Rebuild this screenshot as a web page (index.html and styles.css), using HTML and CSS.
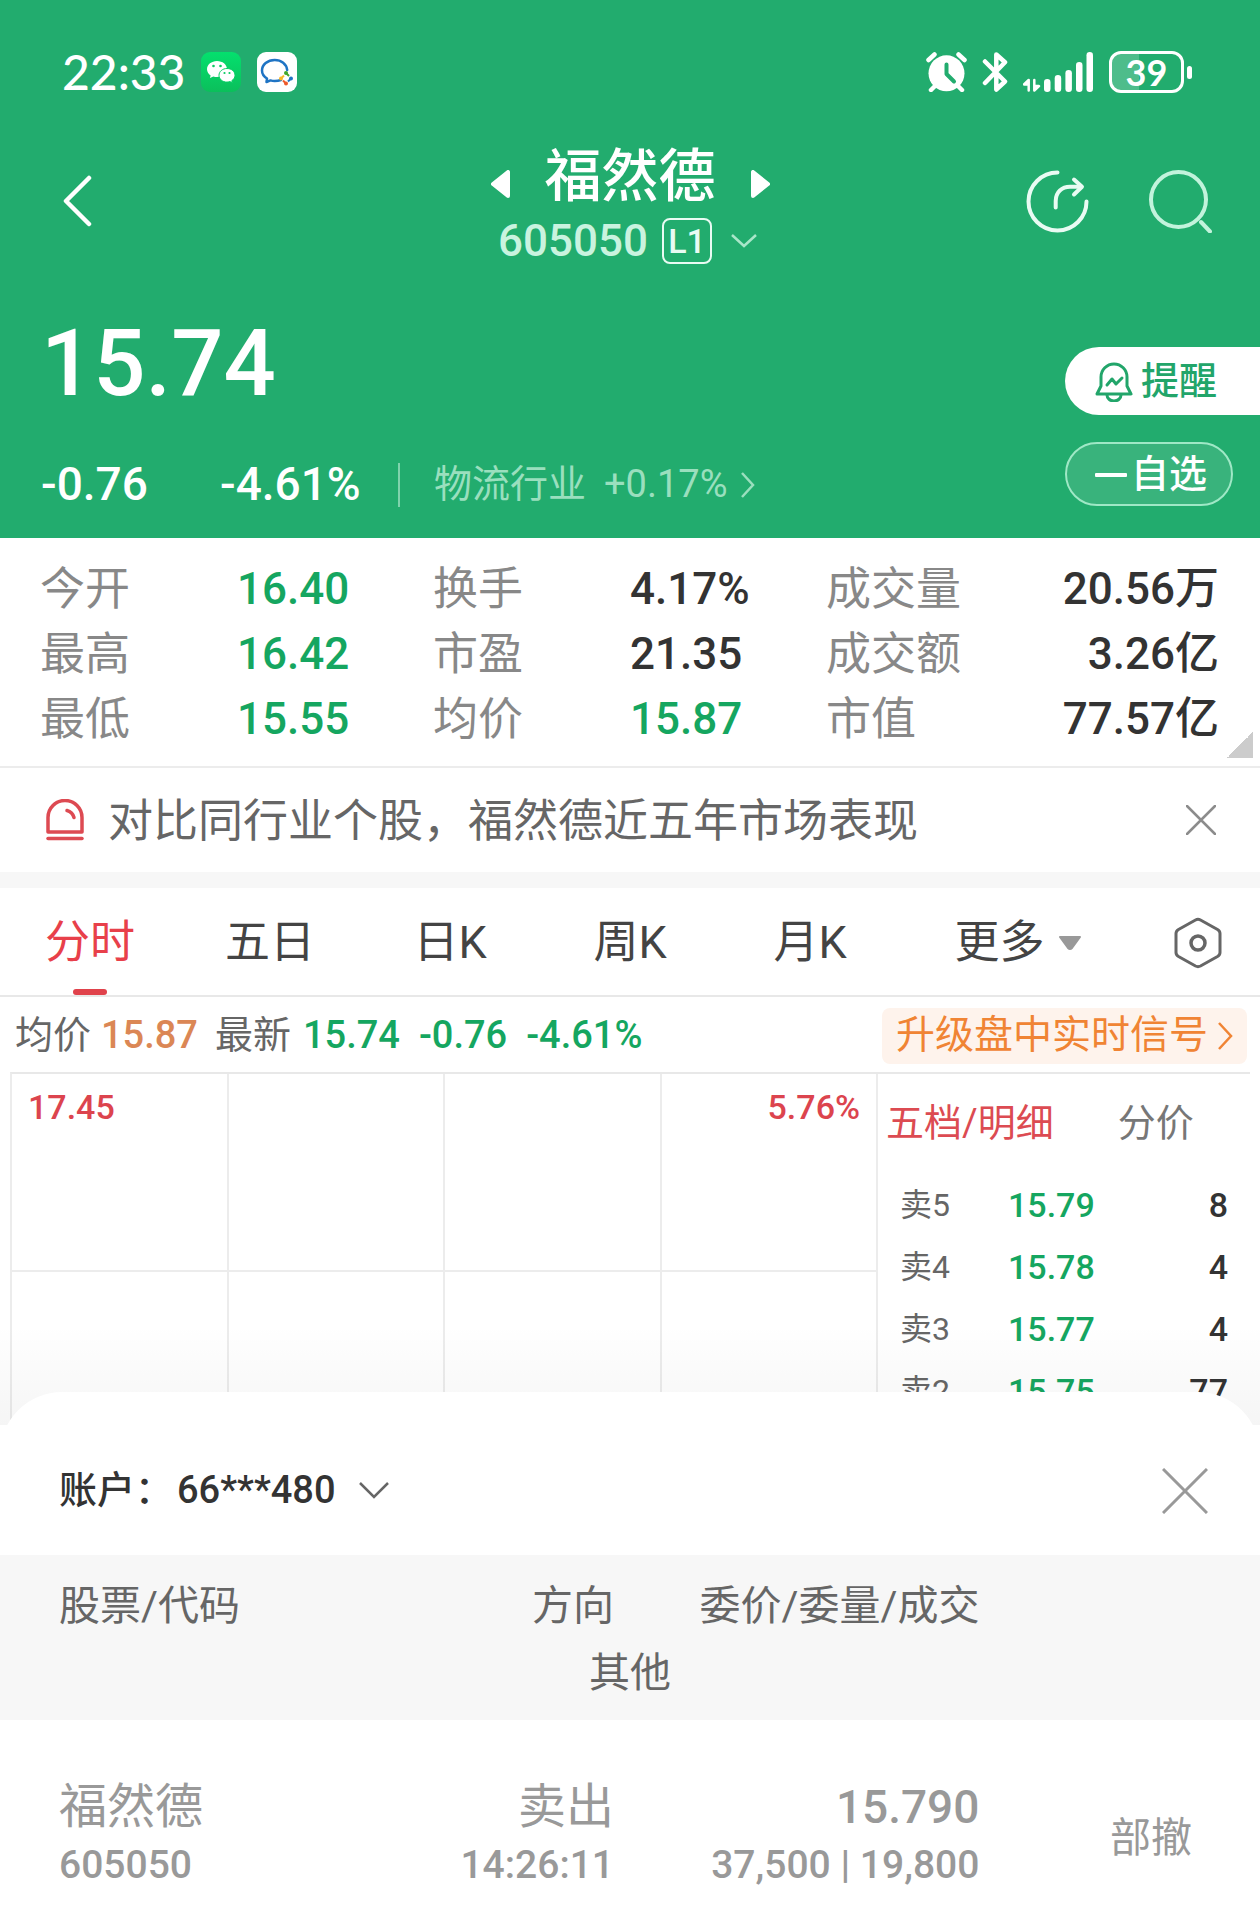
FILE: index.html
```html
<!DOCTYPE html>
<html lang="zh-CN">
<head>
    <meta charset="UTF-8">
    <meta name="viewport" content="width=device-width, initial-scale=1.0">
    <title>福然德 605050</title>
    <link rel="stylesheet" href="styles.css">
</head>
<body>
    <header class="hero">
        <div class="status-bar">
            <div class="status-left">
                <span class="clock">22:33</span>
                <svg class="app-icon" width="40" height="40" viewBox="0 0 40 40">
                    <defs>
                        <linearGradient id="wx" x1="0" y1="0" x2="0" y2="1">
                            <stop offset="0" stop-color="#04e06e"/>
                            <stop offset="1" stop-color="#0bbf5b"/>
                        </linearGradient>
                    </defs>
                    <rect width="40" height="40" rx="9" fill="url(#wx)"/>
                    <path d="M16 9C10.500 9 6 12.600 6 17.200c0 2.600 1.500 4.700 3.600 6.200L9 26l3.300-1.600c1.200.4 2.400.6 3.700.6 5.500 0 10-3.600 10-8S21.500 9 16 9z" fill="#fff"/>
                    <path d="M26 16.500c-4.500 0-8 3-8 6.800s3.500 6.800 8 6.800c1 0 2-.2 3-.5l2.300 1.300-.5-2.200c2-1.300 3.200-3.200 3.200-5.400 0-3.800-3.500-6.800-8-6.800z" fill="#fff" stroke="#06cf64" stroke-width="1"/>
                    <g fill="#0acb62">
                        <circle cx="12.500" cy="14" r="1.300"/>
                        <circle cx="19.500" cy="14" r="1.300"/>
                        <circle cx="23.500" cy="21" r="1.100"/>
                        <circle cx="28.500" cy="21" r="1.100"/>
                    </g>
                </svg>
                <svg class="app-icon" width="40" height="40" viewBox="0 0 40 40">
                    <rect width="40" height="40" rx="9" fill="#fff"/>
                    <path d="M24 28c-2 .7-4 1-6.300 1-1.500 0-3-.2-4.200-.6L9.500 30l.5-3.500C6.800 24.500 5 21.600 5 18.500 5 12.700 10.500 8 17.700 8 24.300 8 29.500 12 30.200 18" fill="none" stroke="#1f74c4" stroke-width="2.500" stroke-linecap="round" stroke-linejoin="round"/>
                    <circle cx="29" cy="21" r="2" fill="#43a82e"/>
                    <circle cx="34" cy="26.500" r="2" fill="#1f74c4"/>
                    <circle cx="29" cy="31.500" r="2" fill="#ee5a2b"/>
                    <circle cx="24" cy="26.500" r="2" fill="#f9b928"/>
                    <path d="M29 21l3 3" stroke="#43a82e" stroke-width="2"/>
                    <path d="M34 26.500l-3 3" stroke="#1f74c4" stroke-width="2"/>
                    <path d="M29 31.500l-3-3" stroke="#ee5a2b" stroke-width="2"/>
                    <path d="M24 26.500l3-3" stroke="#f9b928" stroke-width="2"/>
                </svg>
            </div>
            <div class="status-right">
                <svg width="41" height="40" viewBox="0 0 41 40">
                    <circle cx="20.500" cy="21.300" r="18" fill="#fff"/>
                    <path d="M2.500 8l6-5.500M38.500 8l-6-5.500M9 34l-4 4M32 34l4 4" stroke="#fff" stroke-width="4.500" stroke-linecap="round"/>
                    <path d="M20.500 12.500v9.500l7.500 7.500" fill="none" stroke="#22ac6e" stroke-width="4" stroke-linecap="round" stroke-linejoin="round"/>
                </svg>
                <svg width="26" height="40" viewBox="0 0 26 40">
                    <path d="M3 9.500L23 29.500 14.300 37.500V23M14.300 17V2.500L23 10.300 3 31" fill="none" stroke="#fff" stroke-width="4.500" stroke-linecap="round" stroke-linejoin="round"/>
                </svg>
                <svg width="71" height="40" viewBox="0 0 71 40">
                    <path d="M5.700 38.500V28L1 32.500h4M11.300 28v10.500l4.700-4.500h-4" fill="none" stroke="#fff" stroke-width="2.500" stroke-linecap="round" stroke-linejoin="round"/>
                    <g fill="#fff">
                        <rect x="21" y="27" width="6.500" height="13" rx="3.200"/>
                        <rect x="31.700" y="23" width="6.500" height="17" rx="3.200"/>
                        <rect x="42.400" y="18" width="6.500" height="22" rx="3.200"/>
                        <rect x="53" y="10" width="6.500" height="30" rx="3.200"/>
                        <rect x="63.500" y="0" width="6.500" height="40" rx="3.200"/>
                    </g>
                </svg>
                <div class="battery">
                    <span class="battery-body">39</span>
                    <span class="battery-cap"></span>
                </div>
            </div>
        </div>

        <nav class="stock-nav">
            <button class="icon-btn back" aria-label="返回">
                <svg width="30" height="54" viewBox="0 0 30 54">
                    <path d="M26 4L3 27l23 23" fill="none" stroke="#fff" stroke-width="4.500" stroke-linecap="round" stroke-linejoin="round"/>
                </svg>
            </button>
            <div class="stock-title">
                <div class="stock-name">
                    <button class="icon-btn" aria-label="上一只">
                        <svg width="20" height="28" viewBox="0 0 20 28">
                            <path d="M17 2v24L2 14z" fill="#fff" stroke="#fff" stroke-width="4" stroke-linejoin="round"/>
                        </svg>
                    </button>
                    <h1>福然德</h1>
                    <button class="icon-btn" aria-label="下一只">
                        <svg width="20" height="28" viewBox="0 0 20 28">
                            <path d="M3 2v24l15-12z" fill="#fff" stroke="#fff" stroke-width="4" stroke-linejoin="round"/>
                        </svg>
                    </button>
                </div>
                <button class="stock-code">
                    <span>605050</span>
                    <span class="level">L1</span>
                    <svg width="28" height="16" viewBox="0 0 28 16">
                        <path d="M2 2l12 11L26 2" fill="none" stroke="#a9e6c9" stroke-width="2.500"/>
                    </svg>
                </button>
            </div>
            <div class="nav-actions">
                <button class="icon-btn" aria-label="分享">
                    <svg width="63" height="63" viewBox="0 0 63 63">
                        <g fill="none" stroke="#e9fbf3" stroke-width="4" stroke-linecap="round" stroke-linejoin="round">
                            <path d="M31.500 2.500A29 29 0 1 0 60.500 31.500"/>
                            <path d="M29.700 37.500V31C29.700 22 36 16.700 44 16.700H55"/>
                            <path d="M48 9.500l8 7.200-8 7.800"/>
                        </g>
                    </svg>
                </button>
                <button class="icon-btn" aria-label="搜索">
                    <svg width="63" height="63" viewBox="0 0 63 63">
                        <g fill="none" stroke="#c2f3dc" stroke-width="4" stroke-linecap="round">
                            <circle cx="29.500" cy="29.500" r="27.500"/>
                            <path d="M52 52l9 9.500"/>
                        </g>
                    </svg>
                </button>
            </div>
        </nav>

        <div class="quote">
            <div class="quote-main">
                <div class="price">15.74</div>
                <div class="change-row">
                    <span class="change">-0.76</span>
                    <span class="percent">-4.61%</span>
                    <a class="industry" href="#industry">
                        <span class="industry-name">物流行业</span>
                        <span>+0.17%</span>
                        <svg width="16" height="28" viewBox="0 0 16 28">
                            <path d="M2 2l11 12L2 26" fill="none" stroke="#9adfbe" stroke-width="2.500"/>
                        </svg>
                    </a>
                </div>
            </div>
            <div class="quote-actions">
                <button class="remind">
                    <svg width="38" height="40" viewBox="0 0 38 40">
                        <g fill="none" stroke="#22a56a" stroke-width="3" stroke-linecap="round" stroke-linejoin="round">
                            <path d="M6 24V15a13 13 0 0 1 26 0v9l4 8H2z"/>
                            <path d="M12 33a7 6 0 0 0 14 0"/>
                            <path d="M12 23l5-6 4 5 6-6"/>
                        </g>
                    </svg>
                    提醒
                </button>
                <button class="watch">
                    <svg width="32" height="4" viewBox="0 0 32 4">
                        <rect width="32" height="4" rx="1" fill="#fff"/>
                    </svg>
                    自选
                </button>
            </div>
        </div>
    </header>

    <main>
        <dl class="stats">
            <div class="stat"><dt>今开</dt><dd class="down">16.40</dd></div>
            <div class="stat"><dt>换手</dt><dd>4.17%</dd></div>
            <div class="stat stat-wide"><dt>成交量</dt><dd>20.56万</dd></div>
            <div class="stat"><dt>最高</dt><dd class="down">16.42</dd></div>
            <div class="stat"><dt>市盈</dt><dd>21.35</dd></div>
            <div class="stat stat-wide"><dt>成交额</dt><dd>3.26亿</dd></div>
            <div class="stat"><dt>最低</dt><dd class="down">15.55</dd></div>
            <div class="stat"><dt>均价</dt><dd class="down">15.87</dd></div>
            <div class="stat stat-wide"><dt>市值</dt><dd>77.57亿</dd></div>
        </dl>

        <div class="notice">
            <svg width="38" height="42" viewBox="0 0 38 42">
                <g fill="none" stroke="#dd4a52" stroke-width="3.500" stroke-linecap="round" stroke-linejoin="round">
                    <path d="M2 33V18.500a17 17 0 0 1 34 0V33z"/>
                    <path d="M2 39.500h34"/>
                    <path d="M21 11.500c3.500 1 6 3.500 7 7"/>
                </g>
            </svg>
            <a class="notice-text" href="#compare">对比同行业个股，福然德近五年市场表现</a>
            <button class="icon-btn" aria-label="关闭提示">
                <svg width="30" height="30" viewBox="0 0 30 30">
                    <path d="M1 1l28 28M29 1L1 29" stroke="#8c8c8c" stroke-width="2.500" stroke-linecap="round"/>
                </svg>
            </button>
        </div>

        <div class="tabs">
            <button class="tab active">分时</button>
            <button class="tab">五日</button>
            <button class="tab">日K</button>
            <button class="tab">周K</button>
            <button class="tab">月K</button>
            <button class="tab">更多
                <svg width="24" height="16" viewBox="0 0 24 16">
                    <path d="M2 2h20l-8 11q-2 2-4 0z" fill="#999" stroke="#999" stroke-width="2" stroke-linejoin="round"/>
                </svg>
            </button>
            <button class="tab" aria-label="设置">
                <svg width="48" height="52" viewBox="0 0 48 52">
                    <path d="M21.500 3q2.500-1.300 5 0l17 9.500q2.500 1.500 2.500 4v19q0 2.500-2.500 4l-17 9.500q-2.500 1.300-5 0l-17-9.500Q2 38 2 35.500v-19q0-2.500 2.500-4z" fill="none" stroke="#666" stroke-width="3"/>
                    <circle cx="24" cy="26" r="7" fill="none" stroke="#666" stroke-width="3.500"/>
                </svg>
            </button>
        </div>

        <div class="summary">
            <span class="label">均价</span>
            <span class="avg">15.87</span>
            <span class="label latest">最新</span>
            <span class="num down">15.74</span>
            <span class="num down">-0.76</span>
            <span class="num down">-4.61%</span>
            <a class="upgrade" href="#upgrade">
                升级盘中实时信号
                <svg width="16" height="28" viewBox="0 0 16 28">
                    <path d="M2 1l12 13L2 27" fill="none" stroke="#f08434" stroke-width="2.500"/>
                </svg>
            </a>
        </div>

        <section class="market">
            <div class="chart">
                <div class="cell"><span class="axis">17.45</span></div>
                <div class="cell"></div>
                <div class="cell"></div>
                <div class="cell cell-last"><span class="axis">5.76%</span></div>
                <div class="cell"></div>
                <div class="cell"></div>
                <div class="cell"></div>
                <div class="cell"></div>
            </div>
            <div class="depth">
                <div class="depth-tabs">
                    <button class="depth-tab active">五档/明细</button>
                    <button class="depth-tab">分价</button>
                </div>
                <table class="depth-table">
                    <tr><th>卖5</th><td class="down">15.79</td><td class="volume">8</td></tr>
                    <tr><th>卖4</th><td class="down">15.78</td><td class="volume">4</td></tr>
                    <tr><th>卖3</th><td class="down">15.77</td><td class="volume">4</td></tr>
                    <tr><th>卖2</th><td class="down">15.75</td><td class="volume">77</td></tr>
                </table>
            </div>
        </section>
    </main>

    <section class="sheet">
        <div class="account">
            <label for="account">账户：</label>
            <select id="account">
                <option>66***480</option>
            </select>
            <svg width="32" height="20" viewBox="0 0 32 20">
                <path d="M2 2l14 14L30 2" fill="none" stroke="#666" stroke-width="2.500"/>
            </svg>
            <button class="icon-btn close" aria-label="关闭">
                <svg width="46" height="46" viewBox="0 0 46 46">
                    <path d="M1 1l44 44M45 1L1 45" stroke="#999" stroke-width="3"/>
                </svg>
            </button>
        </div>
        <table class="orders">
            <thead>
                <tr>
                    <th class="col-stock">股票/代码</th>
                    <th class="col-side">方向</th>
                    <th class="col-price">委价/委量/成交</th>
                    <th class="col-state"></th>
                </tr>
                <tr>
                    <th class="other" colspan="4">其他</th>
                </tr>
            </thead>
            <tbody>
                <tr>
                    <td>
                        <div class="big">福然德</div>
                        <div class="small">605050</div>
                    </td>
                    <td>
                        <div class="big">卖出</div>
                        <div class="small">14:26:11</div>
                    </td>
                    <td>
                        <div class="big amount">15.790</div>
                        <div class="small">37,500 | 19,800</div>
                    </td>
                    <td class="state">部撤</td>
                </tr>
            </tbody>
        </table>
    </section>
</body>
</html>
```

FILE: styles.css
```css
* {
    box-sizing: border-box;
}

body {
    margin: 0;
    font-family: Roboto, "Noto Sans CJK SC", sans-serif;
    font-size: 38px;
    line-height: 1.2;
    background-color: #fff;
    color: #333;
}

button, select {
    font: inherit;
    color: inherit;
    background: none;
    border: none;
    padding: 0;
    cursor: pointer;
}

a {
    color: inherit;
    text-decoration: none;
}

svg {
    display: block;
    flex-shrink: 0;
}

.icon-btn {
    display: block;
}

.down {
    color: #15a660;
}

/* green header */
.hero {
    background-color: #22ac6e;
    color: #fff;
    padding-bottom: 23px;
}

.status-bar {
    display: flex;
    justify-content: space-between;
    align-items: center;
    height: 144px;
    padding: 0 68px 0 62px;
}

.status-left, .status-right {
    display: flex;
    align-items: center;
}

.status-left {
    gap: 16px;
}

.status-right {
    gap: 15px;
}

.clock {
    font-family: Lato, sans-serif;
    font-size: 48px;
    font-weight: 500;
    line-height: 60px;
}

.battery {
    display: flex;
    align-items: center;
    gap: 3px;
}

.battery-body {
    width: 75px;
    height: 42px;
    border: 3px solid #fff;
    border-radius: 12px;
    background: linear-gradient(to right, rgba(255, 255, 255, 0.2) 39%, transparent 39%);
    font-family: Lato, sans-serif;
    font-size: 36px;
    font-weight: 700;
    line-height: 36px;
    text-align: center;
}

.battery-cap {
    width: 5px;
    height: 13px;
    border-radius: 3px;
    background-color: #fff;
}

.stock-nav {
    display: grid;
    grid-template-columns: 1fr auto 1fr;
    align-items: center;
    padding: 0 48px;
    margin-top: -10px;
}

.back {
    padding-left: 15px;
}

.stock-title {
    display: flex;
    flex-direction: column;
    align-items: center;
}

.stock-name {
    display: flex;
    align-items: center;
    gap: 34px;
    height: 80px;
    padding-top: 6px;
}

.stock-name .icon-btn {
    padding-top: 14px;
}

h1 {
    margin: 0;
    font-size: 57px;
    font-weight: 500;
    line-height: 74px;
}

.stock-code {
    display: flex;
    align-items: center;
    height: 54px;
    padding-right: 4px;
    font-size: 44px;
    font-weight: 500;
    color: #c9f3df;
}

.level {
    width: 50px;
    height: 46px;
    margin: 0 18px 0 14px;
    border: 2px solid #e9fbf3;
    border-radius: 8px;
    color: #e9fbf3;
    font-size: 34px;
    line-height: 42px;
    text-align: center;
}

.nav-actions {
    display: flex;
    justify-content: flex-end;
    gap: 60px;
}

.quote {
    display: flex;
    justify-content: space-between;
    padding-top: 35px;
}

.quote-main {
    padding-left: 41px;
}

.price {
    font-size: 92px;
    font-weight: 500;
    line-height: 122px;
}

.change-row {
    display: flex;
    align-items: center;
    height: 60px;
    margin-top: 30px;
    font-size: 46px;
    font-weight: 500;
}

.change {
    width: 179px;
}

.percent {
    width: 178px;
}

.industry {
    display: flex;
    align-items: center;
    gap: 12px;
    height: 44px;
    padding-left: 34px;
    border-left: 2px solid #7fd3ac;
    color: #9adfbe;
    font-size: 38px;
    font-weight: 400;
}

.industry-name {
    margin-right: 6px;
}

.quote-actions {
    display: flex;
    flex-direction: column;
    gap: 27px;
    padding-top: 44px;
}

.remind, .watch {
    display: flex;
    align-items: center;
    gap: 8px;
    padding: 2px 0 0 30px;
    font-weight: 500;
}

.remind {
    width: 195px;
    height: 68px;
    border-radius: 34px 0 0 34px;
    background-color: #fff;
    color: #22a56a;
}

.watch {
    gap: 4px;
    width: 168px;
    height: 64px;
    padding-left: 28px;
    border: 2px solid #9fe8c6;
    border-radius: 32px;
    background-color: #39b37c;
}

/* price figures */
.stats {
    display: grid;
    grid-template-columns: repeat(3, 1fr);
    margin: 0;
    padding: 19px 41px 14px 40px;
    border-bottom: 2px solid #ececec;
    background: linear-gradient(to bottom right, transparent 50%, #ccc 50%) right 7px bottom 8px / 26px 26px no-repeat;
}

.stat {
    display: flex;
    align-items: center;
    height: 65px;
    line-height: 65px;
}

.stat dt {
    width: 197px;
    font-size: 45px;
    color: #888;
}

.stat dd {
    margin: 0;
    font-size: 44px;
    font-weight: 500;
}

.stat-wide {
    justify-content: space-between;
}

.stat-wide dt {
    width: auto;
}

.notice {
    display: flex;
    align-items: center;
    height: 104px;
    padding: 0 44px 0 46px;
}

.notice-text {
    flex: 1;
    margin-left: 24px;
    padding-top: 4px;
    font-size: 45px;
    color: #666;
}

.tabs {
    display: grid;
    grid-template-columns: repeat(5, 1fr) 236px 124px;
    height: 125px;
    border-top: 16px solid #f7f7f7;
    border-bottom: 2px solid #e8e8e8;
}

.tab {
    display: flex;
    align-items: center;
    justify-content: center;
    gap: 13px;
    padding-top: 3px;
    font-size: 45px;
    color: #444;
}

.tab.active {
    position: relative;
    color: #e8404a;
}

.tab.active::after {
    content: "";
    position: absolute;
    bottom: 0;
    left: 50%;
    width: 34px;
    height: 6px;
    margin-left: -17px;
    border-radius: 3px;
    background-color: #e0424b;
}

.summary {
    display: flex;
    align-items: center;
    height: 75px;
    padding: 2px 13px 0 15px;
    font-weight: 500;
}

.label {
    font-weight: 400;
    color: #666;
}

.avg {
    margin-left: 10px;
    color: #db8755;
}

.latest {
    margin: 0 12px 0 17px;
}

.num {
    margin-right: 19px;
}

.upgrade {
    display: flex;
    align-items: center;
    gap: 9px;
    height: 56px;
    margin-left: auto;
    padding: 0 14px;
    border-radius: 8px;
    background-color: #fef3ec;
    color: #f08434;
    font-size: 39px;
    font-weight: 400;
}

/* minute chart and order depth */
.market {
    position: relative;
    display: grid;
    grid-template-columns: 70% 30%;
    height: 353px;
    padding: 0 10px;
    overflow: hidden;
}

.market::after {
    content: "";
    position: absolute;
    right: 0;
    bottom: 0;
    left: 0;
    height: 100px;
    background: linear-gradient(to bottom, rgba(0, 0, 0, 0), rgba(0, 0, 0, 0.04));
    pointer-events: none;
}

.chart, .depth {
    border-top: 2px solid #e8e8e8;
}

.chart {
    display: grid;
    grid-template-columns: repeat(4, 1fr);
    grid-auto-rows: 198px;
    border-left: 2px solid #ececec;
}

.cell {
    padding: 13px 16px 0;
    border-right: 2px solid #ececec;
    border-bottom: 2px solid #ececec;
}

.cell-last {
    text-align: right;
}

.axis {
    display: block;
    font-size: 34px;
    font-weight: 500;
    line-height: 40px;
    color: #dc444e;
}

.depth-tabs {
    display: flex;
    gap: 64px;
    height: 100px;
    padding-left: 8px;
}

.depth-tab {
    color: #777;
}

.depth-tab.active {
    color: #dc4b52;
}

.depth-table {
    width: 100%;
    border-collapse: collapse;
    font-size: 34px;
    font-weight: 500;
    line-height: 62px;
}

.depth-table th {
    width: 130px;
    padding: 0 0 0 22px;
    font-size: 32px;
    font-weight: 400;
    text-align: left;
    color: #666;
}

.depth-table td {
    padding: 0;
}

.depth-table .volume {
    padding-right: 22px;
    text-align: right;
}

/* order sheet */
.sheet {
    position: relative;
    margin-top: -33px;
    border-radius: 62px 62px 0 0;
    background-color: #fff;
}

.account {
    display: flex;
    align-items: center;
    height: 163px;
    padding: 34px 52px 0 59px;
    font-weight: 500;
}

.account select {
    appearance: none;
    margin: 0 22px 0 4px;
}

.close {
    margin-left: auto;
}

.orders {
    width: 100%;
    border-collapse: collapse;
    table-layout: fixed;
    text-align: right;
    color: #999;
}

.orders thead {
    background-color: #f7f7f7;
    color: #666;
    font-size: 41px;
    line-height: 67px;
}

.orders th {
    padding: 18px 16px 0 0;
    font-weight: 400;
}

.orders .other {
    padding: 0 0 13px;
    text-align: center;
}

.col-stock, .col-side {
    width: 25%;
}

.col-price {
    width: 29%;
}

.orders td {
    padding: 54px 16px 37px 0;
}

.orders th:first-child, .orders td:first-child {
    text-align: left;
}

.orders .col-stock, .orders td:first-child {
    padding-left: 59px;
}

.orders th.other {
    text-align: center;
}

.big {
    font-size: 48px;
    line-height: 66px;
}

.amount {
    font-size: 46px;
    font-weight: 500;
}

.small {
    font-size: 39px;
    font-weight: 500;
    line-height: 50px;
}

.orders .state {
    padding: 68px 68px 37px 0;
    font-size: 41px;
}
```
